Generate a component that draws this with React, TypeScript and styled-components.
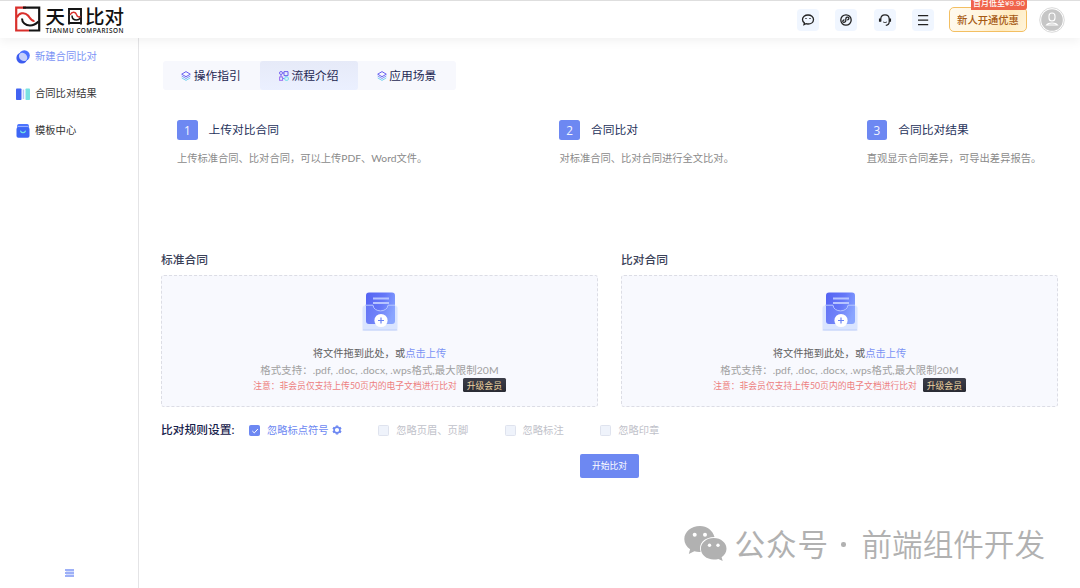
import React from "react";
import styled, { createGlobalStyle, css } from "styled-components";

const GlobalStyle = createGlobalStyle`
  * { box-sizing: border-box; }
  body {
    margin: 0;
    background: #fff;
    font-family: Lato, "Noto Sans CJK SC", sans-serif;
    color: #333;
    overflow: hidden;
  }
  svg { display: block; flex: none; }
`;

const Page = styled.div`
  position: relative;
  display: flex;
  flex-direction: column;
  width: 1080px;
  height: 588px;
  overflow: hidden;
`;

const Header = styled.header`
  position: relative;
  z-index: 1;
  display: flex;
  align-items: center;
  flex: none;
  height: 38px;
  padding: 0 15px 0 14px;
  border-top: 1px solid #dedede;
  background: #fff;
  box-shadow: 0 3px 10px rgba(0, 0, 0, 0.06);
`;

const Brand = styled.div`
  display: flex;
  align-items: center;
  gap: 4.5px;
  flex: 1;
`;

const BrandText = styled.div`
  display: flex;
  flex-direction: column;
  padding-top: 1px;
  color: #111;
`;

const BrandName = styled.div`
  display: flex;
  align-items: center;
  height: 19px;
  font-size: 19.5px;
  line-height: 19px;
  font-weight: 500;
  svg { margin: 0 2px 0 2px; }
`;

const BrandSub = styled.div`
  height: 8px;
  font: 500 6.4px/9px "Noto Sans", sans-serif;
  letter-spacing: 0.52px;
  white-space: nowrap;
`;

const Tools = styled.div`
  display: flex;
  gap: 16.3px;
  margin-right: 15px;
`;

const ToolButton = styled.button`
  display: flex;
  align-items: center;
  justify-content: center;
  width: 22px;
  height: 22px;
  padding: 0;
  border: 0;
  border-radius: 4px;
  background: #f0f6ff;
`;

const Promo = styled.button`
  position: relative;
  width: 78px;
  height: 25px;
  margin-right: 12px;
  padding: 0;
  border: 1.5px solid #f3bf62;
  border-radius: 5px;
  background: linear-gradient(115deg, #fffaf0 0%, #fff4dc 48%, #ffeabc 72%, #fff5dd 100%);
  color: #a65a14;
  font: 500 10.3px/20px "Noto Sans CJK SC", sans-serif;
  white-space: nowrap;
`;

const PromoTag = styled.span`
  position: absolute;
  top: -10px;
  right: -1px;
  width: 56px;
  height: 12px;
  border-radius: 3px 3px 3px 0;
  background: #f0644b;
  color: #fff;
  font: 500 8px/12px "Liberation Sans", "Noto Sans CJK SC", sans-serif;
  text-align: center;
`;

const Body = styled.div`
  display: flex;
  flex: 1;
  min-height: 0;
`;

const Sidebar = styled.nav`
  display: flex;
  flex-direction: column;
  flex: none;
  width: 139px;
  border-right: 1px solid #e4e4e6;
`;

const MenuItem = styled.a<{ $active?: boolean }>`
  display: flex;
  align-items: center;
  gap: 5px;
  height: 36.7px;
  padding-left: 16px;
  font-size: 10.3px;
  line-height: 16px;
  color: ${(p) => (p.$active ? "#7b93f5" : "#333")};
  svg { margin-top: 2px; }
`;

const Collapse = styled.div`
  display: flex;
  justify-content: center;
  margin-top: auto;
  padding-bottom: 11px;
`;

const Main = styled.main`
  display: flex;
  flex-direction: column;
  flex: 1;
  padding: 23px 22px 0 22px;
`;

const Tabs = styled.div`
  display: flex;
  align-self: flex-start;
  margin-left: 1.5px;
  height: 29px;
  border-radius: 3px;
  background: #f7f8fd;
  overflow: hidden;
`;

const Tab = styled.div<{ $active?: boolean }>`
  display: flex;
  align-items: center;
  justify-content: center;
  gap: 2.5px;
  width: 97.8px;
  padding-right: 1px;
  font-size: 11.75px;
  line-height: 18px;
  color: #1d2752;
  ${(p) =>
    p.$active &&
    css`
      border-radius: 3px;
      background: linear-gradient(#e6eaf8, #ebf0ff);
    `}
`;

const Steps = styled.section`
  display: grid;
  grid-template-columns: 382.4px 307.3px auto;
  height: 155px;
  padding: 30px 0 0 16px;
`;

const StepTitle = styled.div`
  display: flex;
  align-items: center;
  gap: 11px;
  height: 20px;
  font-size: 11.75px;
  line-height: 18px;
  color: #27335c;
`;

const StepNumber = styled.span`
  width: 20.5px;
  height: 20.5px;
  border-radius: 2.5px;
  background: #6d88f2;
  color: #f4f6ff;
  font: 400 11.75px/20px "Open Sans", sans-serif;
  text-align: center;
`;

const StepText = styled.p`
  margin: 10px 0 0;
  font-size: 10.27px;
  line-height: 16px;
  color: #8a8a8a;
  white-space: nowrap;
`;

const Uploads = styled.section`
  display: grid;
  grid-template-columns: 437px 437px;
  column-gap: 23px;
`;

const UploadTitle = styled.h3`
  margin: 6px 0 6px;
  font-size: 11.75px;
  line-height: 18px;
  font-weight: 500;
  color: #3a4158;
`;

const DropZone = styled.div`
  display: flex;
  flex-direction: column;
  align-items: center;
  height: 132px;
  padding-top: 15px;
  border: 1px dashed #dcdde5;
  border-radius: 3px;
  background: #f8f9fe;
  white-space: nowrap;
`;

const DropHint = styled.div`
  margin-top: 12px;
  font-size: 10.27px;
  line-height: 16px;
  color: #606060;
  a { color: #7b93f5; }
`;

const FormatHint = styled.div`
  margin-top: 1px;
  font-size: 10.4px;
  letter-spacing: 0.09px;
  line-height: 16px;
  color: #a0a0a0;
`;

const MemberHint = styled.div`
  display: flex;
  align-items: center;
  gap: 6px;
  height: 14px;
  font-size: 8.8px;
  color: #ed7f7f;
`;

const UpgradeButton = styled.button`
  width: 43px;
  height: 14px;
  padding: 0;
  border: 0;
  border-radius: 1.5px;
  background: linear-gradient(#3c3e49, #292b33);
  color: #eed4a0;
  font: 400 8.8px/13px "Noto Sans CJK SC", sans-serif;
`;

const Rules = styled.section`
  display: flex;
  align-items: center;
  height: 20px;
  margin-top: 13px;
  white-space: nowrap;
`;

const RulesTitle = styled.span`
  width: 88px;
  font-size: 11.75px;
  line-height: 18px;
  font-weight: 500;
  color: #16204a;
`;

const Rule = styled.label<{ $checked?: boolean; $width: number }>`
  display: flex;
  align-items: center;
  width: ${(p) => p.$width}px;
  font-size: 10.27px;
  line-height: 16px;
  color: ${(p) => (p.$checked ? "#6d88f2" : "#bfc2ca")};
`;

const CheckBox = styled.span<{ $checked?: boolean }>`
  display: flex;
  align-items: center;
  justify-content: center;
  width: 11px;
  height: 11px;
  margin: 1px 7px 0 0;
  border: 1px solid ${(p) => (p.$checked ? "#6d88f2" : "#dfe3ee")};
  border-radius: 1.5px;
  background: ${(p) => (p.$checked ? "#6d88f2" : "#eff3fb")};
`;

const RuleGear = styled.span`
  margin-left: 3.5px;
`;

const StartButton = styled.button`
  align-self: flex-start;
  width: 59px;
  height: 24px;
  margin: 14px 0 0 419px;
  padding: 0;
  border: 0;
  border-radius: 2px;
  background: #6d88f2;
  color: #fff;
  font: 400 8.8px/22px "Noto Sans CJK SC", sans-serif;
`;

const Watermark = styled.div`
  position: absolute;
  left: 684px;
  top: 519px;
  display: flex;
  align-items: center;
  height: 48px;
  color: #b1b1b1;
  font: 400 30.6px/48px "Noto Sans CJK SC", sans-serif;
  white-space: nowrap;
`;

const WatermarkLabel = styled.span`
  width: 95px;
  margin-left: 7.5px;
  letter-spacing: 0.9px;
`;

const WatermarkDot = styled.span`
  width: 4.5px;
  height: 4.5px;
  margin: 3px 16px 0 11.5px;
  border-radius: 50%;
  background: #b1b1b1;
`;

const WatermarkName = styled.span`
  font-weight: 350;
`;

const BrandMark = () => (
  <svg width="27" height="27" viewBox="0 0 27 27" fill="none">
    <path d="M12 1.700H2.200v22.800H15" stroke="#d9302c" strokeWidth="2.200" />
    <path d="M9 1.700h16.200v22.800H15" stroke="#151515" strokeWidth="2.200" />
    <path d="M3 11.500C4.500 7 10.500 5.500 14 9.500c2.200 2.700 3.500 6 6.500 5.500" stroke="#d9302c" strokeWidth="2" />
    <path d="M8 12.500c0 4 3.500 7 8 7 3.500 0 6-1.500 8.500-4" stroke="#151515" strokeWidth="2" />
  </svg>
);

const BrandEye = () => (
  <svg width="16" height="18" viewBox="0 0 16 18" fill="none">
    <path d="M2 17.500V2h12v15.500M2 16h12" stroke="#151515" strokeWidth="1.900" />
    <path d="M3 8C5 4.500 8.500 4.500 9.500 7.500c.8 2.200 2 3 4 2" stroke="#d9302c" strokeWidth="1.500" />
    <path d="M5 8.500c0 3 2 4.500 4.500 4.500 1.700 0 3-.8 4-2" stroke="#151515" strokeWidth="1.500" />
  </svg>
);

const toolIcons = [
  <g key="chat">
    <path d="M7 2C3.900 2 1.500 3.900 1.500 6.400c0 1.400.7 2.600 1.800 3.400L3 11.700l2-1c.6.2 1.300.3 2 .3 3.100 0 5.500-2 5.500-4.600S10.100 2 7 2Z" />
    <path d="M5 5v1M9 5v1" />
  </g>,
  <g key="mini">
    <circle cx="7" cy="7" r="5.200" />
    <path d="M5.500 6.800c-1.500.1-2 1.200-1.500 2 .7 1 2.700.5 2.800-1.100V6c.1-2 2.300-2.300 2.900-1.200.5 1-.2 2-1.500 2" />
  </g>,
  <g key="service">
    <path d="M2.800 8.500V6C2.800 3.300 4.600 1.800 7 1.800s4.200 1.500 4.200 4.200v2.800c0 2-1.200 3.300-3.400 3.600" strokeWidth="1.200" />
    <path d="M1.900 5.500v3.200M12.100 5.500v3.200" strokeWidth="1.900" />
    <path d="M5 8.800c1 1 3 1 4 0" strokeWidth=".8" />
  </g>,
  <path key="menu" d="M2 2.700h10.200M2 7.200h10.200M2 11.700h10.200" />,
];

const Avatar = () => (
  <svg width="26" height="26" viewBox="0 0 26 26" fill="none">
    <circle cx="13" cy="13" r="12.300" fill="#fff" stroke="#d9d9d9" />
    <circle cx="13" cy="13" r="10.800" fill="#c6c6c6" />
    <rect x="10" y="6" width="6" height="8" rx="3" stroke="#fff" strokeWidth="1.100" />
    <path d="M7.500 18c1.200-1.700 3-2 5.500-2s4.300.3 5.500 2z" stroke="#fff" strokeWidth="1.100" />
  </svg>
);

const CompareIcon = () => (
  <svg width="14" height="14" viewBox="0 0 14 14">
    <circle cx="5.900" cy="8" r="5.500" fill="#3d5cf0" />
    <circle cx="8.400" cy="5.600" r="5.400" fill="#4a70ff" />
    <ellipse cx="7.100" cy="6.900" rx="3.700" ry="4.600" transform="rotate(-45 7.100 6.900)" fill="#c5d0fb" />
  </svg>
);

const ResultIcon = () => (
  <svg width="14" height="14" viewBox="0 0 14 14">
    <rect x="0" y="1.500" width="5.500" height="11.500" rx=".8" fill="#4263f2" />
    <rect x="6.700" y="2.500" width="1.500" height="9.500" fill="#b9c5fa" />
    <rect x="9.500" y="1.500" width="4.500" height="11.500" rx=".8" fill="#79e2e2" />
  </svg>
);

const TemplateIcon = () => (
  <svg width="14" height="14" viewBox="0 0 14 14" fill="none">
    <rect x="1.200" width="11.600" height="5" rx="1.500" fill="#4d75ff" />
    <path d="M2 2.500h10" stroke="#a9bcff" strokeWidth=".8" />
    <rect x=".5" y="3.200" width="13" height="10.600" rx="1.800" fill="#3d66f5" />
    <path d="M4.700 7.200c.7 2 3.900 2 4.600 0" stroke="#6fe0e5" strokeWidth="1.300" strokeLinecap="round" />
  </svg>
);

const LayersIcon = () => (
  <svg width="10" height="10" viewBox="0 0 10 10" fill="none" strokeLinejoin="round">
    <path d="m5 .6 4.300 2.600L5 5.700.7 3.200z" stroke="#655df0" />
    <path d="M.7 5 5 7.500 9.300 5" stroke="#758bf5" strokeWidth=".9" />
    <path d="M.7 6.900 5 9.400l4.300-2.500" stroke="#69cdec" strokeWidth=".9" />
  </svg>
);

const FlowIcon = () => (
  <svg width="10" height="10" viewBox="0 0 10 10" fill="none" strokeWidth="1">
    <circle cx="2" cy="2" r="1.500" stroke="#7764f0" />
    <path d="M5 .6h4v4H5zM4 2h1M2 4v2" stroke="#6d5fee" />
    <rect x=".6" y="6" width="3" height="3.300" stroke="#9a6df0" />
    <path d="M3.700 7.500h2M7 4.600V6" stroke="#6f94f4" />
    <rect x="5.800" y="6" width="3.500" height="3.300" rx="1" stroke="#70dfec" />
  </svg>
);

const UploadIcon = () => (
  <svg width="36" height="42" viewBox="0 0 36 42" fill="none">
    <defs>
      <linearGradient id="sheet" x1="4" y1="8" x2="33" y2="18" gradientUnits="userSpaceOnUse">
        <stop stopColor="#5665f3" />
        <stop offset=".55" stopColor="#6678f8" />
        <stop offset="1" stopColor="#84a0ff" />
      </linearGradient>
    </defs>
    <rect x=".5" y="15" width="35" height="24.500" rx="2.500" fill="#e4ecff" />
    <path d="M1 39h34" stroke="#c3d2f8" strokeLinecap="round" />
    <rect x="4" y="1.500" width="29" height="31.500" rx="3" fill="url(#sheet)" />
    <path d="M11 7.500h16M11 12h16" stroke="#b7c4ff" strokeWidth="1.900" />
    <path d="M.5 16.500c0-1.500 1-2.300 2.500-2.300h8c0 8 15 8 15 0h7c1.500 0 2.500.8 2.500 2.300V37c0 1.500-1 2.300-2.500 2.300H3C1.500 39.300.5 38.500.5 37z" fill="#a9beff" fillOpacity=".16" />
    <path d="M3 14.200h8c.6 7.600 14.400 7.600 15 0h7" stroke="#b9c8ff" />
    <circle cx="19" cy="29.500" r="6.600" fill="#fff" />
    <path d="M16 29.500h6M19 26.500v6" stroke="#6a82f3" strokeWidth="1.200" />
  </svg>
);

const GearIcon = () => (
  <svg width="10" height="10" viewBox="0 0 10 10" fill="none" stroke="#6d88f2">
    <circle cx="5" cy="5" r="2.900" strokeWidth="1.600" />
    <path d="M5 .4v1.400M5 8.200v1.400M1 2.700l1.200.7M7.800 6.600l1.200.7M1 7.300l1.200-.7M7.800 3.400 9 2.700" strokeWidth="2.300" />
  </svg>
);

const WechatIcon = () => (
  <svg width="43" height="36" viewBox="0 0 43 36" fill="#b1b1b1">
    <path d="M16 1C7.200 1 .3 6.800.3 14c0 4.200 2.200 7.700 5.800 10.200L4.800 29l5.500-2.800c2 .6 4 .8 6.300.7C14 18.500 20.500 12 30.500 12 28.800 5.500 23 1 16 1Z" />
    <path d="M29.700 13c-7.300 0-12.800 4.800-12.800 10.800s5.500 10.700 12.800 10.700c1.700 0 3.200-.2 4.700-.6l4.300 2.100-1.100-3.700c3-2.100 4.900-5.100 4.900-8.500 0-6-5.500-10.800-12.800-10.800Z" />
    <g fill="#fff">
      <circle cx="10.700" cy="9.700" r="2" />
      <circle cx="21" cy="9.700" r="2" />
      <circle cx="25.500" cy="20.200" r="1.700" />
      <circle cx="34" cy="20.200" r="1.700" />
    </g>
  </svg>
);

const steps = [
  { title: "上传对比合同", text: "上传标准合同、比对合同，可以上传PDF、Word文件。" },
  { title: "合同比对", text: "对标准合同、比对合同进行全文比对。" },
  { title: "合同比对结果", text: "直观显示合同差异，可导出差异报告。" },
];

const rules = [
  { label: "忽略标点符号", width: 129.3, checked: true },
  { label: "忽略页眉、页脚", width: 126.3 },
  { label: "忽略标注", width: 95.7 },
  { label: "忽略印章", width: 70 },
];

const Upload = ({ title }: { title: string }) => (
  <div>
    <UploadTitle>{title}</UploadTitle>
    <DropZone>
      <UploadIcon />
      <DropHint>
        将文件拖到此处，或<a>点击上传</a>
      </DropHint>
      <FormatHint>格式支持：.pdf, .doc, .docx, .wps格式,最大限制20M</FormatHint>
      <MemberHint>
        注意：非会员仅支持上传50页内的电子文档进行比对
        <UpgradeButton>升级会员</UpgradeButton>
      </MemberHint>
    </DropZone>
  </div>
);

export default function App() {
  return (
    <Page>
      <GlobalStyle />
      <Header>
        <Brand>
          <BrandMark />
          <BrandText>
            <BrandName>
              天<BrandEye />比对
            </BrandName>
            <BrandSub>TIANMU COMPARISON</BrandSub>
          </BrandText>
        </Brand>
        <Tools>
          {toolIcons.map((icon, i) => (
            <ToolButton key={i}>
              <svg width="14" height="14" viewBox="0 0 14 14" fill="none" stroke="#222" strokeWidth="1.300">
                {icon}
              </svg>
            </ToolButton>
          ))}
        </Tools>
        <Promo>
          新人开通优惠
          <PromoTag>首月低至¥9.90</PromoTag>
        </Promo>
        <Avatar />
      </Header>
      <Body>
        <Sidebar>
          <MenuItem $active>
            <CompareIcon />
            新建合同比对
          </MenuItem>
          <MenuItem>
            <ResultIcon />
            合同比对结果
          </MenuItem>
          <MenuItem>
            <TemplateIcon />
            模板中心
          </MenuItem>
          <Collapse>
            <svg width="9" height="8" viewBox="0 0 9 8" stroke="#7d97f5">
              <path d="M0 1h9M0 4h9M0 7h9" strokeWidth="1.300" />
              <path d="M1 2.500h8M1 5.500h8" stroke="#d3dcfc" />
            </svg>
          </Collapse>
        </Sidebar>
        <Main>
          <Tabs>
            <Tab>
              <LayersIcon />
              操作指引
            </Tab>
            <Tab $active>
              <FlowIcon />
              流程介绍
            </Tab>
            <Tab>
              <LayersIcon />
              应用场景
            </Tab>
          </Tabs>
          <Steps>
            {steps.map((step, i) => (
              <div key={step.title}>
                <StepTitle>
                  <StepNumber>{i + 1}</StepNumber>
                  {step.title}
                </StepTitle>
                <StepText>{step.text}</StepText>
              </div>
            ))}
          </Steps>
          <Uploads>
            <Upload title="标准合同" />
            <Upload title="比对合同" />
          </Uploads>
          <Rules>
            <RulesTitle>比对规则设置:</RulesTitle>
            {rules.map((rule) => (
              <Rule key={rule.label} $checked={rule.checked} $width={rule.width}>
                <CheckBox $checked={rule.checked}>
                  {rule.checked && (
                    <svg width="8" height="8" viewBox="0 0 8 8" fill="none" stroke="#fff">
                      <path d="m1.300 4 2 1.900L6.900 2" />
                    </svg>
                  )}
                </CheckBox>
                {rule.label}
                {rule.checked && (
                  <RuleGear>
                    <GearIcon />
                  </RuleGear>
                )}
              </Rule>
            ))}
          </Rules>
          <StartButton>开始比对</StartButton>
        </Main>
      </Body>
      <Watermark>
        <WechatIcon />
        <WatermarkLabel>公众号</WatermarkLabel>
        <WatermarkDot />
        <WatermarkName>前端组件开发</WatermarkName>
      </Watermark>
    </Page>
  );
}
